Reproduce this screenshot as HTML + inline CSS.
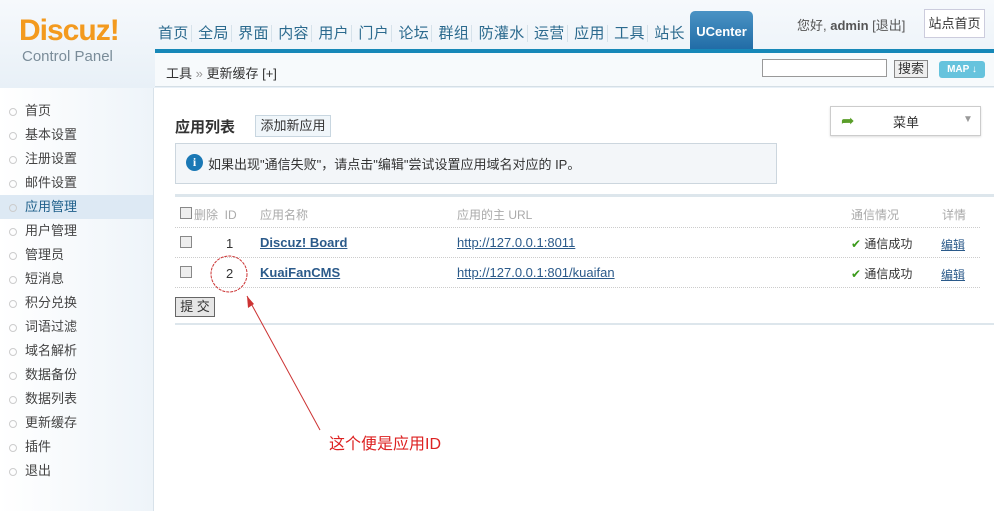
<!DOCTYPE html>
<html><head><meta charset="utf-8"><style>
*{margin:0;padding:0;box-sizing:border-box}
body{width:994px;height:511px;overflow:hidden;background:#fff;font-family:"Liberation Sans","Noto Sans CJK SC",sans-serif;font-size:12px;color:#333;position:relative}
.hd{position:absolute;left:0;top:0;width:994px;height:88px;background:linear-gradient(#f6f9fc,#e8f0f7)}
.logo{position:absolute;left:19px;top:14px;font:bold 30px "Liberation Sans",sans-serif;color:#f39a1e;letter-spacing:-1px}
.cp{position:absolute;left:22px;top:48px;font-size:15px;color:#7a8c99}
.nav{position:absolute;left:158px;top:22px;font-size:15px;color:#2b6a8e;letter-spacing:0.3px}
.nav span{margin-right:2px;padding-right:2px;border-right:1px solid #d6e2ea}
.uc{position:absolute;left:690px;top:11px;width:63px;height:40px;background:linear-gradient(#4a93c4,#1f6aa5);border-radius:5px 5px 0 0;color:#fff;font-weight:bold;font-size:13px;text-align:center;line-height:42px}
.line{position:absolute;left:155px;top:49px;width:839px;height:4px;background:#1788b8}
.bar{position:absolute;left:155px;top:53px;width:839px;height:34px;background:#f7fafc;border-bottom:1px solid #d5dfe6}
.bc{position:absolute;left:166px;top:63px;font-size:13px;color:#333}
.user{position:absolute;left:797px;top:15px;font-size:13px;color:#555}
.site{position:absolute;left:924px;top:9px;width:61px;height:29px;border:1px solid #ccd;background:#fff;font-size:13px;line-height:27px;text-align:center;color:#333}
.srch{position:absolute;left:762px;top:59px;width:125px;height:18px;border:1px solid #999;background:#fff}
.sbtn{position:absolute;left:894px;top:60px;width:34px;height:18px;border:1px solid #888;background:#eee;font-size:13px;text-align:center;line-height:16px}
.map{position:absolute;left:939px;top:61px;width:46px;height:17px;background:#66c3dd;border-radius:3px;color:#fff;font-size:10px;font-weight:bold;text-align:center;line-height:17px}
.side{position:absolute;left:0;top:88px;width:154px;height:423px;background:linear-gradient(90deg,#fff,#eef4f9);border-right:1px solid #d8e2ea}
.side div{height:24px;line-height:24px;padding-left:25px;font-size:13px;color:#444;position:relative}
.side div:before{content:"";position:absolute;left:9px;top:9px;width:6px;height:6px;border-radius:50%;border:1px solid #ccc}
.side .on{background:#dde9f4;color:#1e5f8a}
.t{position:absolute}
a{color:#2b5a8a;text-decoration:underline}
.dot{position:absolute;left:175px;width:805px;border-top:1px dotted #ccc}
.cb{position:absolute;width:12px;height:12px;border:1px solid #888;background:#eee}
</style></head><body>
<div class="hd"></div>
<div class="logo">Discuz!</div>
<div class="cp">Control Panel</div>
<div class="nav"><span>首页</span> <span>全局</span> <span>界面</span> <span>内容</span> <span>用户</span> <span>门户</span> <span>论坛</span> <span>群组</span> <span>防灌水</span> <span>运营</span> <span>应用</span> <span>工具</span> <span style="border:0">站长</span></div>
<div class="uc">UCenter</div>
<div class="user">您好, <b>admin</b> [退出]</div>
<div class="site">站点首页</div>
<div class="line"></div>
<div class="bar"></div>
<div class="bc">工具 <span style="color:#999">»</span> 更新缓存 [+]</div>
<div class="srch"></div>
<div class="sbtn">搜索</div>
<div class="map">MAP ↓</div>
<div class="side"><div style="margin-top:11px">首页</div><div>基本设置</div><div>注册设置</div><div>邮件设置</div><div class="on">应用管理</div><div>用户管理</div><div>管理员</div><div>短消息</div><div>积分兑换</div><div>词语过滤</div><div>域名解析</div><div>数据备份</div><div>数据列表</div><div>更新缓存</div><div>插件</div><div>退出</div></div>

<div class="t" style="left:175px;top:116px;font-size:15px;font-weight:bold;color:#333">应用列表</div>
<div class="t" style="left:255px;top:115px;width:76px;height:22px;border:1px solid #c8d6e0;background:#f0f6fa;font-size:13px;line-height:20px;text-align:center">添加新应用</div>
<div class="t" style="left:830px;top:106px;width:151px;height:30px;border:1px solid #ccc;background:#fff;box-shadow:0 1px 2px #ddd"><span style="position:absolute;left:10px;top:4px;color:#5a9e2a;font-size:16px">➦</span><span style="position:absolute;left:62px;top:5px;font-size:13px">菜单</span><span style="position:absolute;left:132px;top:7px;color:#999;font-size:10px">▼</span></div>
<div class="t" style="left:175px;top:143px;width:602px;height:41px;border:1px solid #ccd6de;background:#f3f6f9"><span style="position:absolute;left:10px;top:10px;width:17px;height:17px;border-radius:50%;background:#1a78b5;color:#fff;font:bold 12px 'Liberation Serif';text-align:center;line-height:17px">i</span><span style="position:absolute;left:32px;top:10px;font-size:13px">如果出现"通信失败"，请点击"编辑"尝试设置应用域名对应的 IP。</span></div>
<div class="t" style="left:175px;top:194px;width:819px;border-top:3px solid #dde6ec"></div>
<div class="cb" style="left:180px;top:207px"></div>
<div class="t" style="left:194px;top:206px;color:#aaa;font-size:12px">删除 &nbsp;ID</div>
<div class="t" style="left:260px;top:206px;color:#aaa">应用名称</div>
<div class="t" style="left:457px;top:206px;color:#aaa">应用的主 URL</div>
<div class="t" style="left:851px;top:206px;color:#aaa">通信情况</div>
<div class="t" style="left:942px;top:206px;color:#aaa">详情</div>
<div class="dot" style="top:227px"></div>
<div class="cb" style="left:180px;top:236px"></div>
<div class="t" style="left:226px;top:236px;font-size:13px">1</div>
<div class="t" style="left:260px;top:235px;font-size:13px;font-weight:bold"><a>Discuz! Board</a></div>
<div class="t" style="left:457px;top:235px;font-size:13px"><a>http://127.0.0.1:8011</a></div>
<div class="t" style="left:851px;top:235px;font-size:12px"><span style="color:#3a9a1a">✔</span> 通信成功</div>
<div class="t" style="left:941px;top:236px;font-size:12px"><a>编辑</a></div>
<div class="dot" style="top:257px"></div>
<div class="cb" style="left:180px;top:266px"></div>
<div class="t" style="left:226px;top:266px;font-size:13px">2</div>
<div class="t" style="left:260px;top:265px;font-size:13px;font-weight:bold"><a>KuaiFanCMS</a></div>
<div class="t" style="left:457px;top:265px;font-size:13px"><a>http://127.0.0.1:801/kuaifan</a></div>
<div class="t" style="left:851px;top:265px;font-size:12px"><span style="color:#3a9a1a">✔</span> 通信成功</div>
<div class="t" style="left:941px;top:266px;font-size:12px"><a>编辑</a></div>
<div class="dot" style="top:287px"></div>
<div class="t" style="left:175px;top:297px;width:40px;height:20px;border:1px solid #666;background:#e6e6e6;font-size:13px;text-align:center;line-height:18px">提 交</div>
<div class="t" style="left:175px;top:323px;width:819px;border-top:2px solid #dde6ec"></div>
<svg class="t" style="left:0;top:0" width="994" height="511"><circle cx="229" cy="274" r="18" fill="none" stroke="#c33" stroke-width="1" stroke-dasharray="3,1"/><line x1="320" y1="430" x2="247" y2="296" stroke="#c33" stroke-width="1"/><path d="M247 296 L248 308 L254 304 Z" fill="#c33"/></svg>
<div class="t" style="left:329px;top:430px;font-size:16px;color:#d22">这个便是应用ID</div>
</body></html>
